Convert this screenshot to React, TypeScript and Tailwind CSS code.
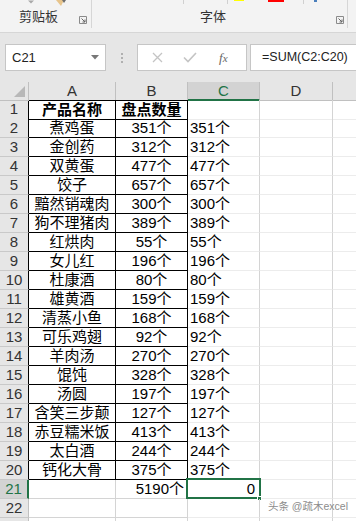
import React from 'react';

const items: [string, number][] = [
  ['煮鸡蛋', 351],
  ['金创药', 312],
  ['双黄蛋', 477],
  ['饺子', 657],
  ['黯然销魂肉', 300],
  ['狗不理猪肉', 389],
  ['红烘肉', 55],
  ['女儿红', 196],
  ['杜康酒', 80],
  ['雄黄酒', 159],
  ['清蒸小鱼', 168],
  ['可乐鸡翅', 92],
  ['羊肉汤', 270],
  ['馄饨', 328],
  ['汤圆', 197],
  ['含笑三步颠', 127],
  ['赤豆糯米饭', 413],
  ['太白酒', 244],
  ['钙化大骨', 375],
];

const font = { fontFamily: '"Liberation Sans", "Noto Sans CJK SC", sans-serif' };

// small dialog launcher in the corner of a ribbon group
const Launcher = () => (
  <svg width="8" height="8" viewBox="0 0 8 8" className="shrink-0">
    <path d="M0.5 7.5V0.5h7v7z" fill="none" stroke="#8a8a8a" strokeWidth="1" />
    <path d="M2.5 2.5l3.5 3.5M6 3.5V6H3.5" fill="none" stroke="#666" strokeWidth="1" />
  </svg>
);

const Ribbon = () => (
  <div className="relative flex h-[33px] bg-[#f3f3f3] border-b border-[#d6d6d6]">
    {/* clipped tops of ribbon buttons */}
    <svg className="absolute left-[27px] top-0" width="8" height="4" viewBox="0 0 8 4">
      <path d="M1 0.5h6L4 3.5z" fill="#a8a8a8" />
    </svg>
    <svg className="absolute left-[54px] top-0" width="14" height="7" viewBox="0 0 14 7">
      <path d="M2 0h8l-3 6z" fill="#e7c48b" />
      <path d="M8 0h4l-2 3z" fill="#6b6b6b" />
    </svg>
    <div className="absolute left-[183px] top-0 h-[4px] w-px bg-[#d0d0d0]" />
    <div className="absolute left-[227px] top-0 h-[4px] w-px bg-[#d0d0d0]" />
    <div className="absolute left-[303px] top-0 h-[4px] w-px bg-[#d0d0d0]" />
    <div className="absolute left-[234px] top-0 h-[1px] w-[10px] bg-[#ffff00]" />
    <div className="absolute left-[268px] top-0 h-[2px] w-[16px] bg-[#ff0000]" />
    <div className="absolute left-[314px] top-0 h-[2px] w-[3px] bg-[#4a7ebb]" />

    <div className="flex w-[92px] items-end border-r border-[#d6d6d6] pb-[3px] mb-[4px]">
      <span className="flex-1 pl-[19px] text-[13px] leading-[16px] text-[#333]">剪贴板</span>
      <span className="pr-[4px] pb-[1px]"><Launcher /></span>
    </div>
    <div className="flex w-[256px] items-end border-r border-[#d6d6d6] pb-[3px] mb-[4px]">
      <span className="flex-1 pl-[108px] text-[13px] leading-[16px] text-[#333]">字体</span>
      <span className="pr-[3px] pb-[1px]"><Launcher /></span>
    </div>
  </div>
);

const FormulaBar = () => (
  <div className="flex h-[49px] items-start bg-[#e6e6e6] pt-[11px]">
    <div className="ml-[5px] flex h-[27px] w-[101px] shrink-0 items-center justify-between border border-[#c6c6c6] bg-white pl-[6px] pr-[6px]">
      <span className="text-[13px] text-[#222]">C21</span>
      <svg width="8" height="5" viewBox="0 0 8 5"><path d="M0 0h8L4 4.5z" fill="#777" /></svg>
    </div>
    <div className="flex h-[27px] w-[31px] shrink-0 flex-col items-center justify-center gap-[2px]">
      <div className="h-[2px] w-[2px] bg-[#b0b0b0]" />
      <div className="h-[2px] w-[2px] bg-[#b0b0b0]" />
      <div className="h-[2px] w-[2px] bg-[#b0b0b0]" />
    </div>
    <div className="flex h-[27px] w-[110px] shrink-0 items-center border border-[#c6c6c6] bg-white">
      <svg className="ml-[14px]" width="11" height="11" viewBox="0 0 11 11">
        <path d="M1 1l9 9M10 1l-9 9" stroke="#c4c4c4" strokeWidth="1.3" />
      </svg>
      <svg className="ml-[20px]" width="14" height="11" viewBox="0 0 14 11">
        <path d="M1 5.5l4 4L13 1" fill="none" stroke="#c4c4c4" strokeWidth="1.6" />
      </svg>
      <span className="ml-[22px] text-[13px] italic text-[#666]" style={{ fontFamily: '"Liberation Serif", serif' }}>
        f<span className="text-[11px]">x</span>
      </span>
    </div>
    <div className="ml-[3px] flex h-[27px] min-w-0 flex-1 items-center overflow-hidden border border-r-0 border-[#c6c6c6] bg-white pl-[11px]">
      <span className="whitespace-nowrap text-[12.5px] text-[#222]">=SUM(C2:C20)</span>
    </div>
  </div>
);

const cols = 'grid grid-cols-[29px_87px_72px_72px_73px_1fr]';

const HeaderRow = () => (
  <div className={`${cols} h-[18px] bg-[#e6e6e6] text-[15px] leading-[17px] text-[#333]`}>
    <div className="relative border-r border-b border-[#c0c0c0]">
      <svg className="absolute right-[3px] bottom-[3px]" width="11" height="11" viewBox="0 0 11 11">
        <path d="M11 0v11H0z" fill="#b8b8b8" />
      </svg>
    </div>
    <div className="border-r border-b border-[#c0c0c0] text-center">A</div>
    <div className="border-r border-b border-[#c0c0c0] text-center">B</div>
    <div className="border-r border-b-2 border-[#c0c0c0] border-b-[#217346] bg-[#d3d3d3] text-center text-[#217346]">C</div>
    <div className="border-r border-b border-[#c0c0c0] text-center">D</div>
    <div className="border-b border-[#c0c0c0]" />
  </div>
);

type RowProps = {
  n: number;
  a?: React.ReactNode;
  b?: React.ReactNode;
  c?: React.ReactNode;
  bold?: boolean;
};

const Row = ({ n, a, b, c, bold }: RowProps) => {
  const inTable = n <= 20;
  const active = n === 21;
  const tb = inTable ? 'border-black' : 'border-[#d4d4d4]';
  return (
    <div className={`${cols} h-[19px] text-[15px] leading-[18px] text-black`}>
      <div
        className={`border-b border-[#c9c9c9] text-center ${
          active
            ? 'border-r-2 border-r-[#217346] bg-[#d3d3d3] text-[#217346]'
            : inTable
            ? 'border-r border-r-black bg-[#e6e6e6] text-[#333]'
            : 'border-r border-r-[#c0c0c0] bg-[#e6e6e6] text-[#333]'
        }`}
      >
        {n}
      </div>
      <div className={`border-r border-b ${tb} text-center ${n === 1 ? 'border-t' : ''} ${bold ? 'font-bold' : ''} whitespace-nowrap`}>
        {a}
      </div>
      <div
        className={`border-r border-b ${tb} ${n === 1 ? 'border-t' : ''} ${active ? 'pr-[3px] text-right' : 'text-center'} ${bold ? 'font-bold' : ''} whitespace-nowrap`}
      >
        {b}
      </div>
      <div className="relative border-r border-b border-[#d4d4d4] border-b-[#ececec] pl-[2px] whitespace-nowrap">
        {active ? (
          <>
            <div className="absolute -left-[2px] -top-[2px] h-[21px] w-[75px] border-2 border-[#217346]" />
            <div className="absolute -right-[3px] -bottom-[3px] h-[5px] w-[5px] border border-white bg-[#217346]" />
            <div className="pr-[4px] text-right">{c}</div>
          </>
        ) : (
          c
        )}
      </div>
      <div className="border-r border-b border-[#d4d4d4] border-b-[#ececec]" />
      <div className="border-b border-[#ececec]" />
    </div>
  );
};

// top sliver of row 23, cut off by the window edge
const PartialRow = () => (
  <div className={`${cols} h-[3px]`}>
    <div className="border-r border-[#c0c0c0] bg-[#e6e6e6]" />
    <div className="border-r border-[#d4d4d4]" />
    <div className="border-r border-[#d4d4d4]" />
    <div className="border-r border-[#d4d4d4]" />
    <div className="border-r border-[#d4d4d4]" />
    <div />
  </div>
);

export default function App() {
  return (
    <div className="relative h-[521px] w-[356px] overflow-hidden bg-white" style={font}>
      <Ribbon />
      <FormulaBar />
      <HeaderRow />
      <Row n={1} a="产品名称" b="盘点数量" bold />
      {items.map(([name, qty], i) => (
        <Row key={name} n={i + 2} a={name} b={`${qty}个`} c={`${qty}个`} />
      ))}
      <Row n={21} b="5190个" c="0" />
      <Row n={22} />
      <PartialRow />
      <div className="absolute right-[8px] bottom-[6px] text-[10.5px] text-[#8c8c8c]">头条 @疏木excel</div>
    </div>
  );
}
